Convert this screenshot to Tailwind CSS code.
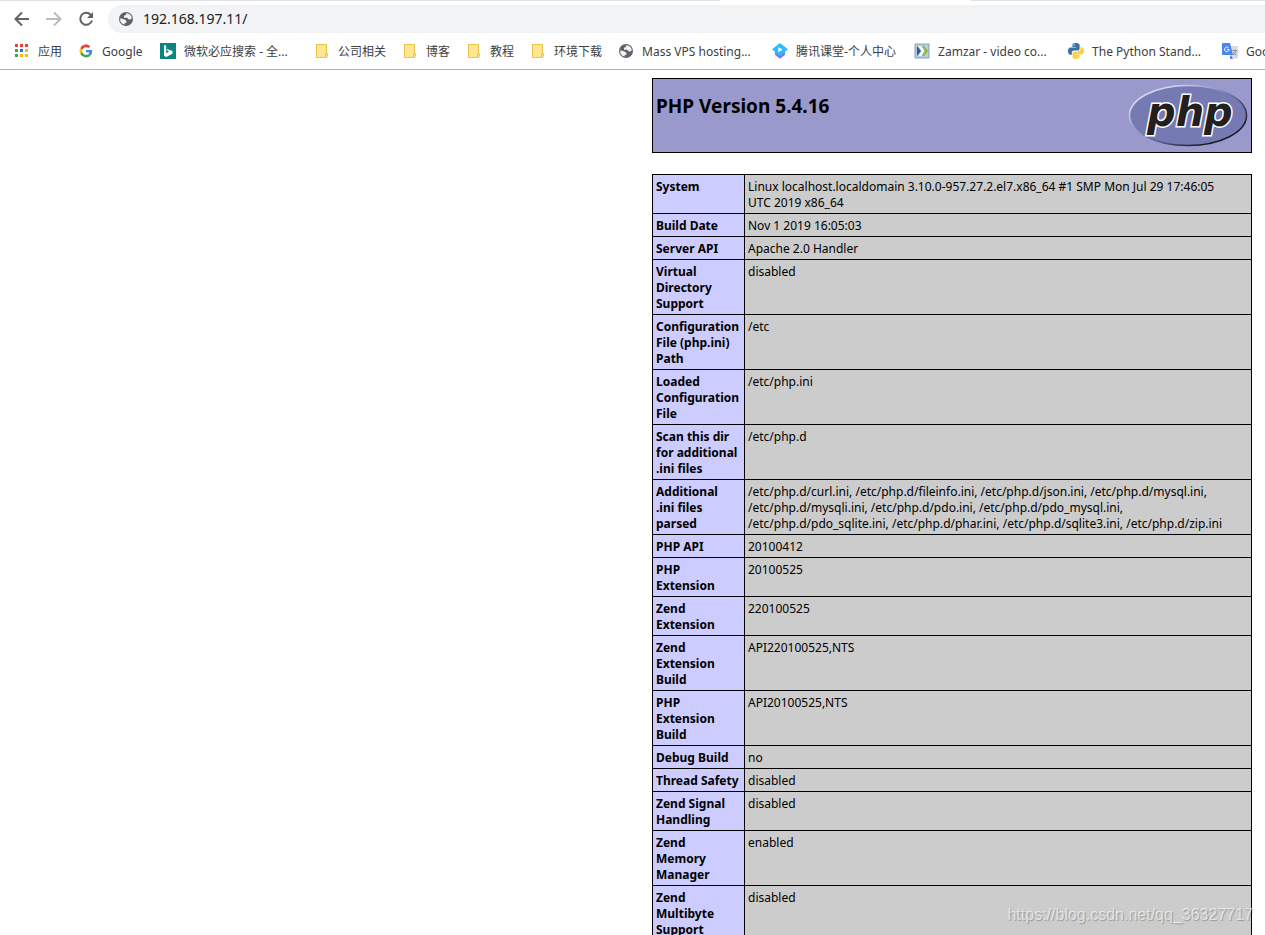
<!DOCTYPE html>
<html lang="zh-CN">
<head>
<meta charset="utf-8">
<title>phpinfo()</title>
<script src="https://cdn.jsdelivr.net/npm/@tailwindcss/browser@4"></script>
</head>
<body class="relative flex h-screen flex-col overflow-hidden bg-white font-['Noto_Sans','Noto_Sans_CJK_SC',sans-serif] text-xs leading-4 text-black">

<svg class="absolute size-0" aria-hidden="true">
  <symbol id="globe" viewBox="0 0 14 14">
    <circle cx="7" cy="7" r="7" fill="#5f6368"/>
    <path d="M7.3 1.3 6.8 3 5 3.8v1.9h3.3l1 1.5 1.7.2 1.8-.8A5.8 5.8 0 0 0 7.3 1.3ZM1.3 6.2a5.8 5.8 0 0 0 4.2 6.4l.3-1.7 1.6-.1V9L5.6 7.6 1.3 6.2Z" fill="#f1f3f4"/>
  </symbol>
  <symbol id="folder" viewBox="0 0 12 14">
    <path d="M.5.5h10v9h1v3l-1 1H.5Z" fill="#ffe694" stroke="#e8c446"/>
    <path d="M9.5 13V9.5h1" fill="none" stroke="#e8c446"/>
  </symbol>
</svg>

<header class="shrink-0 border-b border-[#b3b3b3] bg-white text-[#3c4043]">
  <div class="flex h-px justify-between">
    <div class="w-[720px] bg-[#dee1e6]"></div>
    <div class="w-[294px] bg-[#dee1e6]"></div>
  </div>
  <div class="flex items-center pt-1 pl-3.5">
    <button type="button" aria-label="Back" class="mr-4">
      <svg class="size-4" viewBox="0 0 16 16" fill="none" stroke="#5f6368" stroke-width="2"><path d="M15 8H2M8 1.500 1.500 8 8 14.500"/></svg>
    </button>
    <button type="button" aria-label="Forward" class="mr-4" disabled>
      <svg class="size-4" viewBox="0 0 16 16" fill="none" stroke="#babcbe" stroke-width="2"><path d="M0 8h14M8 1.500 14.500 8 8 14.500"/></svg>
    </button>
    <button type="button" aria-label="Reload" class="mr-3.5">
      <svg class="size-4" viewBox="0 0 16 16"><path d="M12.800 3.800A6 6 0 1 0 14 9.500" fill="none" stroke="#5f6368" stroke-width="2"/><path d="M15 1v6H9Z" fill="#5f6368"/></svg>
    </button>
    <div class="flex h-7 flex-1 items-center gap-2.5 rounded-l-full bg-[#f1f3f4] pl-[11px]">
      <svg class="size-3.5 shrink-0"><use href="#globe"/></svg>
      <input type="text" aria-label="Address" value="192.168.197.11/" class="h-7 flex-1 bg-transparent pb-0.5 text-sm text-[#202124] outline-none">
    </div>
  </div>
  <nav aria-label="Bookmarks" class="flex h-9 items-center gap-4 overflow-hidden pl-3.5 whitespace-nowrap [&_span]:pt-0.5">
    <a href="#" class="flex shrink-0 items-center gap-2">
      <svg class="size-4" viewBox="0 0 16 16"><path d="M1 1h3v3H1zM6 1h3v3H6zM11 1h3v3h-3z" fill="#ea4335"/><path d="M1 6h3v3H1zM1 11h3v3H1z" fill="#34a853"/><path d="M6 6h3v3H6z" fill="#1a73e8"/><path d="M11 6h3v3h-3zM6 11h3v3H6zM11 11h3v3h-3z" fill="#fbbc04"/></svg>
      <span>应用</span>
    </a>
    <a href="#" class="flex shrink-0 items-center gap-2">
      <svg class="size-4" viewBox="-6 -6 60 60"><path fill="#EA4335" d="M24 9.500c3.540 0 6.710 1.220 9.210 3.600l6.850-6.850C35.900 2.380 30.470 0 24 0 14.620 0 6.510 5.380 2.560 13.220l7.980 6.190C12.430 13.720 17.740 9.500 24 9.500z"/><path fill="#4285F4" d="M46.980 24.550c0-1.570-.15-3.090-.38-4.550H24v9.020h12.940c-.58 2.960-2.260 5.480-4.780 7.180l7.730 6c4.510-4.180 7.090-10.360 7.090-17.650z"/><path fill="#FBBC05" d="M10.530 28.590c-.48-1.450-.76-2.990-.76-4.590s.27-3.140.76-4.590l-7.980-6.190C.92 16.460 0 20.120 0 24s.92 7.540 2.560 10.780l7.970-6.190z"/><path fill="#34A853" d="M24 48c6.480 0 11.930-2.130 15.890-5.810l-7.730-6c-2.150 1.450-4.920 2.300-8.160 2.300-6.260 0-11.570-4.220-13.470-9.910l-7.980 6.190C6.510 42.620 14.620 48 24 48z"/></svg>
      <span class="w-[42px]">Google</span>
    </a>
    <a href="#" class="flex shrink-0 items-center gap-2">
      <svg class="size-4" viewBox="0 0 16 16"><path d="M0 0h16v16H0z" fill="#0c8484"/><path d="m4 2 2.200.8v7.500L9 8.800 7.700 8.100 6.800 6l5.700 2v2.700L6.200 14 4 12.800Z" fill="#fff"/></svg>
      <span class="w-[114px]">微软必应搜索 - 全...</span>
    </a>
    <a href="#" class="flex shrink-0 items-center gap-2">
      <svg class="h-3.5 w-4"><use href="#folder"/></svg>
      <span>公司相关</span>
    </a>
    <a href="#" class="flex shrink-0 items-center gap-2">
      <svg class="h-3.5 w-4"><use href="#folder"/></svg>
      <span>博客</span>
    </a>
    <a href="#" class="flex shrink-0 items-center gap-2">
      <svg class="h-3.5 w-4"><use href="#folder"/></svg>
      <span>教程</span>
    </a>
    <a href="#" class="flex shrink-0 items-center gap-2">
      <svg class="h-3.5 w-4"><use href="#folder"/></svg>
      <span>环境下载</span>
    </a>
    <a href="#" class="flex shrink-0 items-center gap-2">
      <svg class="h-3.5 w-4"><use href="#globe"/></svg>
      <span class="w-[114px]">Mass VPS hosting...</span>
    </a>
    <a href="#" class="flex shrink-0 items-center gap-2">
      <svg class="size-4" viewBox="0 0 16 16"><path d="M3 8v4l5 3.800 5-3.800V8Z" fill="#7a7cf5"/><path d="m8 0 8 6.200-8 6.600L0 6.200Z" fill="#2cbcfb"/><path d="M6.300 4.200 10.600 6.600 6.300 9.300Z" fill="#fff"/></svg>
      <span class="w-[102px]">腾讯课堂-个人中心</span>
    </a>
    <a href="#" class="flex shrink-0 items-center gap-2">
      <svg class="size-4" viewBox="0 0 16 16"><path d="M1 1h14v14H1z" fill="#b4cfe2" stroke="#7fa3bd"/><path d="m3 3 4 5-4 5Z" fill="#2f5a98"/><path d="M4.500 3H7l3.500 5L7 13H4.500l3-5Z" fill="#fff"/><path d="M8 3h2l4 5-4 5H8l3-5Z" fill="#8db82a"/></svg>
      <span class="w-[114px]">Zamzar - video co...</span>
    </a>
    <a href="#" class="flex shrink-0 items-center gap-2">
      <svg class="size-4" viewBox="0 0 16 16"><path d="M7.900 0C4.800 0 4.400 1.100 4.400 2v1.900H8v.6H2.400C1 4.500 0 5.700 0 8s1 3.700 2.400 3.700h1.400V9.800c0-1.300 1-2.200 2.300-2.200h3.600c1 0 1.900-.8 1.900-1.900V2c0-1.200-1.400-2-3.700-2Z" fill="#3872a5"/><path d="M8.100 16c3.100 0 3.500-1.100 3.500-2v-1.900H8v-.6h5.600C15 11.500 16 10.300 16 8s-1-3.700-2.400-3.700h-1.300v1.900c0 1.300-1 2.200-2.300 2.200H6.400c-1 0-1.900.8-1.900 1.900V14c0 1.200 1.300 2 3.600 2Z" fill="#ffd140"/><circle cx="6.100" cy="1.900" r=".7" fill="#fff"/><circle cx="9.900" cy="14.100" r=".7" fill="#fff"/></svg>
      <span class="w-[114px]">The Python Stand...</span>
    </a>
    <a href="#" class="flex min-w-0 flex-1 items-center gap-2 overflow-hidden">
      <svg class="size-4 shrink-0" viewBox="0 0 16 16"><path d="M7 3h9v12.500H9Z" fill="#d9dbde"/><path d="M8.500 12 11 15.800H8Z" fill="#3367d6"/><path d="M1 0h7l3 12H1a1 1 0 0 1-1-1V1a1 1 0 0 1 1-1Z" fill="#4a86f0"/><path d="M6.600 4.800A2.300 2.300 0 1 0 7.200 6.500H5" fill="none" stroke="#fff"/><path d="M10.500 7.500H15M12.700 6.500v1M14 8c-.5 2-1.500 3-3 4M11.500 9c.5 1.500 1.500 2.500 3 3" fill="none" stroke="#777" stroke-width=".8"/></svg>
      <span>Google</span>
    </a>
  </nav>
</header>

<main class="flex justify-end pt-2 pr-[13px]">
  <div class="w-[600px]">
    <div class="mb-[21px] flex items-start justify-between border border-black bg-[#9999cc] p-[3px]">
      <h1 class="pt-3 text-[19px] leading-6 font-bold">PHP Version 5.4.16</h1>
      <svg class="h-[67px] w-[120px]" viewBox="0 0 120 67" role="img" aria-label="PHP logo">
        <defs>
          <linearGradient id="rim" x1="0" y1="0" x2="1" y2="1"><stop offset=".2" stop-color="#d5d6ea"/><stop offset=".5" stop-color="#7177b0"/><stop offset=".8" stop-color="#1c1b26"/></linearGradient>
        </defs>
        <ellipse cx="60" cy="33.500" rx="58.500" ry="30" fill="#757ab3" stroke="url(#rim)" stroke-width="1.500"/>
        <text x="19" y="44" font-family="DejaVu Sans, Verdana, sans-serif" font-size="40" font-weight="700" font-style="italic" fill="#231f20" stroke="#fff" stroke-width="3" paint-order="stroke">php</text>
      </svg>
    </div>

    <table class="w-full table-fixed border-collapse [&_td]:border [&_td]:border-black [&_td]:bg-[#cccccc] [&_td]:px-[3px] [&_td]:pt-1 [&_td]:pb-0.5 [&_td]:align-top [&_th]:border [&_th]:border-black [&_th]:bg-[#ccccff] [&_th]:px-[3px] [&_th]:pt-1 [&_th]:pb-0.5 [&_th]:text-left [&_th]:align-top [&_th]:font-bold">
      <colgroup><col class="w-[92px]"><col></colgroup>
      <tbody>
        <tr><th scope="row">System</th><td>Linux localhost.localdomain 3.10.0-957.27.2.el7.x86_64 #1 SMP Mon Jul 29 17:46:05<br>UTC 2019 x86_64</td></tr>
        <tr><th scope="row">Build Date</th><td>Nov 1 2019 16:05:03</td></tr>
        <tr><th scope="row">Server API</th><td>Apache 2.0 Handler</td></tr>
        <tr><th scope="row">Virtual Directory Support</th><td>disabled</td></tr>
        <tr><th scope="row">Configuration File (php.ini) Path</th><td>/etc</td></tr>
        <tr><th scope="row">Loaded Configuration File</th><td>/etc/php.ini</td></tr>
        <tr><th scope="row">Scan this dir for additional .ini files</th><td>/etc/php.d</td></tr>
        <tr><th scope="row">Additional<br>.ini files<br>parsed</th><td>/etc/php.d/curl.ini, /etc/php.d/fileinfo.ini, /etc/php.d/json.ini, /etc/php.d/mysql.ini,<br>/etc/php.d/mysqli.ini, /etc/php.d/pdo.ini, /etc/php.d/pdo_mysql.ini,<br>/etc/php.d/pdo_sqlite.ini, /etc/php.d/phar.ini, /etc/php.d/sqlite3.ini, /etc/php.d/zip.ini</td></tr>
        <tr><th scope="row">PHP API</th><td>20100412</td></tr>
        <tr><th scope="row">PHP<br>Extension</th><td>20100525</td></tr>
        <tr><th scope="row">Zend<br>Extension</th><td>220100525</td></tr>
        <tr><th scope="row">Zend<br>Extension<br>Build</th><td>API220100525,NTS</td></tr>
        <tr><th scope="row">PHP<br>Extension<br>Build</th><td>API20100525,NTS</td></tr>
        <tr><th scope="row">Debug Build</th><td>no</td></tr>
        <tr><th scope="row">Thread Safety</th><td>disabled</td></tr>
        <tr><th scope="row">Zend Signal<br>Handling</th><td>disabled</td></tr>
        <tr><th scope="row">Zend<br>Memory<br>Manager</th><td>enabled</td></tr>
        <tr><th scope="row">Zend<br>Multibyte<br>Support</th><td>disabled</td></tr>
      </tbody>
    </table>
  </div>
</main>

<p class="absolute right-3 bottom-2.5 font-['Liberation_Sans',sans-serif] text-base leading-5 text-white/60 [text-shadow:1px_1px_1px_rgb(0_0_0/0.25)]">https://blog.csdn.net/qq_36327717</p>
</body>
</html>
